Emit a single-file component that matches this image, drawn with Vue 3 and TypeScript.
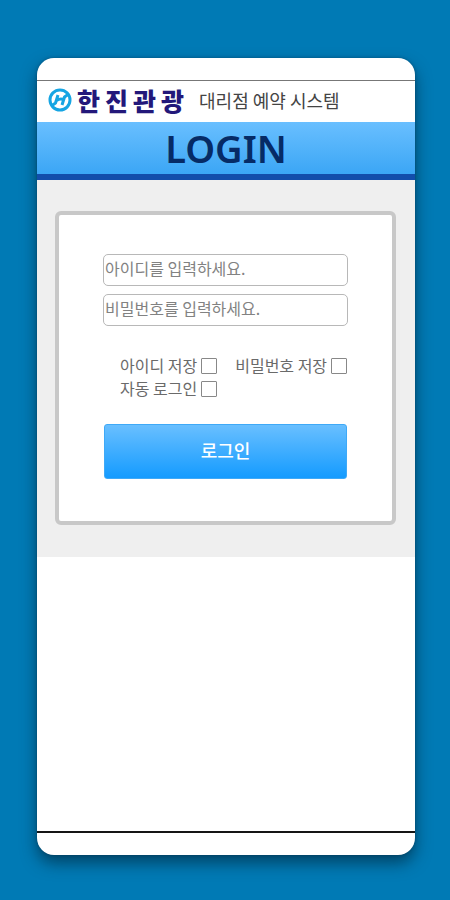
<script setup lang="ts">
import { ref } from 'vue'

const userId = ref('')
const password = ref('')
const saveId = ref(false)
const savePassword = ref(false)
const autoLogin = ref(false)
</script>

<template>
  <div class="page">
    <div class="device">
      <header class="top">
        <svg class="mark" viewBox="0 0 24 24" aria-hidden="true">
          <circle cx="12" cy="12" r="10" fill="none" stroke="#16a5e3" stroke-width="3" />
          <path
            d="M4 17.5 L7.5 15 L10 7 M8.5 12.5 Q12 10.2 15.5 11.5 M14 17 L16.5 9 L20 6.5"
            fill="none"
            stroke="#16a5e3"
            stroke-width="3"
            stroke-linejoin="round"
          />
        </svg>
        <span class="brand">한진관광</span>
        <span class="system">대리점 예약 시스템</span>
      </header>
      <h1 class="banner">LOGIN</h1>
      <main class="content">
        <form class="panel" @submit.prevent>
          <input v-model="userId" class="field" type="text" placeholder="아이디를 입력하세요." aria-label="아이디" />
          <input v-model="password" class="field" type="password" placeholder="비밀번호를 입력하세요." aria-label="비밀번호" />
          <div class="options">
            <label class="option">아이디 저장<input v-model="saveId" class="check" type="checkbox" /></label>
            <label class="option">비밀번호 저장<input v-model="savePassword" class="check" type="checkbox" /></label>
            <label class="option">자동 로그인<input v-model="autoLogin" class="check" type="checkbox" /></label>
          </div>
          <button class="submit" type="submit">로그인</button>
        </form>
      </main>
      <div class="rule"></div>
    </div>
  </div>
</template>

<style>
body {
  background: #007ab5;
}
</style>

<style scoped>
.page {
  display: flex;
  box-sizing: border-box;
  min-height: 100vh;
  padding: 58px 35px 45px 37px;
  font-family: "Noto Sans", "Noto Sans CJK KR", sans-serif;
}
.device {
  display: flex;
  flex: 1;
  flex-direction: column;
  min-width: 0;
  padding: 22px 0;
  border-radius: 17px;
  background: #fff;
  box-shadow: 0 8px 16px rgba(0, 40, 60, 0.65), 0 0 3px rgba(0, 50, 80, 0.5);
}
.top {
  display: flex;
  align-items: center;
  box-sizing: border-box;
  height: 42px;
  padding: 0 11px 4px;
  border-top: 1px solid #777;
  white-space: nowrap;
}
.mark {
  flex: none;
  width: 24px;
  height: 24px;
}
.brand {
  margin-left: 5px;
  color: #23187a;
  font-family: "Noto Sans CJK KR", sans-serif;
  font-size: 25px;
  font-weight: 900;
  line-height: 32px;
  letter-spacing: 5px;
}
.system {
  margin-left: 10px;
  color: #444;
  font-family: "Noto Sans CJK KR", sans-serif;
  font-size: 18px;
  line-height: 24px;
}
.banner {
  box-sizing: border-box;
  height: 58px;
  margin: 0;
  border-bottom: 6px solid #124dab;
  background: linear-gradient(#69bfff, #3ba6f5);
  color: #062b66;
  font-size: 38px;
  font-weight: 600;
  line-height: 52px;
  text-align: center;
}
.content {
  padding: 31px 19px 32px 18px;
  background: #efefef;
}
.panel {
  display: flex;
  flex-direction: column;
  box-sizing: border-box;
  min-height: 314px;
  padding: 39px 44px 40px;
  border: 4px solid #c8c8c8;
  border-radius: 6px;
  background: #fff;
}
.field {
  box-sizing: border-box;
  width: 100%;
  height: 32px;
  margin: 0 0 8px;
  padding: 0 1px 4px;
  border: 1px solid #b8b8b8;
  border-radius: 5px;
  background: #fff;
  color: #444;
  font-family: "Noto Sans CJK KR", sans-serif;
  font-size: 16px;
}
.field::placeholder {
  color: #828282;
  opacity: 1;
}
.options {
  display: flex;
  flex-wrap: wrap;
  column-gap: 18px;
  margin: 20px 0 24px;
  padding-left: 17px;
  color: #6a6a6a;
  font-family: "Noto Sans CJK KR", sans-serif;
  font-size: 16px;
  line-height: 23px;
}
.option {
  display: flex;
  align-items: center;
  gap: 4px;
  white-space: nowrap;
}
.check {
  appearance: none;
  box-sizing: border-box;
  width: 16px;
  height: 16px;
  margin: 0;
  border: 1px solid #888;
  border-radius: 1px;
  background: #fff;
}
.check:checked {
  background: #1e9bfa;
}
.submit {
  height: 55px;
  margin: 0 1px;
  padding: 0 0 4px;
  border: 1px solid #3fa9f7;
  border-radius: 3px;
  background: linear-gradient(#69bfff, #149bff);
  color: #fff;
  font-family: "Noto Sans CJK KR", sans-serif;
  font-size: 18px;
  font-weight: 500;
}
.rule {
  margin-top: auto;
  border-top: 2px solid #151515;
}
</style>
